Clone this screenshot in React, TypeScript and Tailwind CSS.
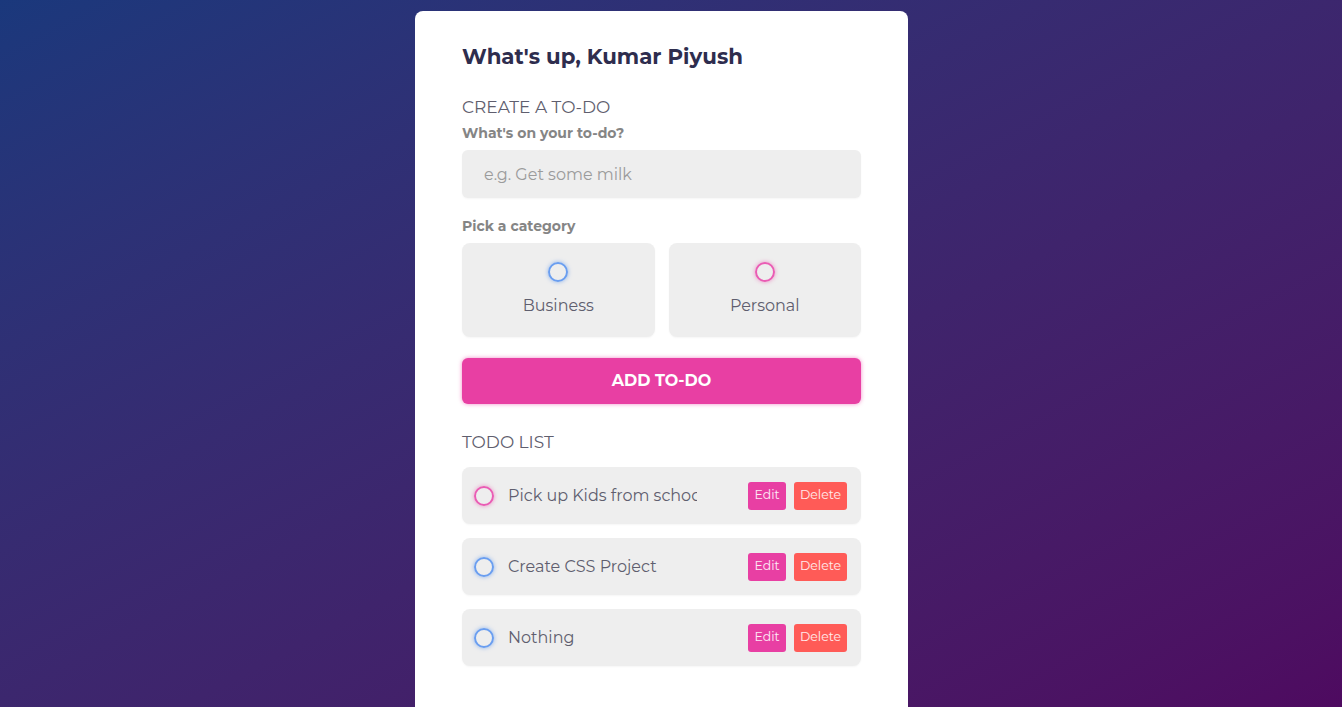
import React, { useState } from 'react';

type Todo = {
  id: number;
  content: string;
  category: 'business' | 'personal';
};

const initialTodos: Todo[] = [
  { id: 1, content: 'Pick up Kids from school', category: 'personal' },
  { id: 2, content: 'Create CSS Project', category: 'business' },
  { id: 3, content: 'Nothing', category: 'business' },
];

function Bubble({ kind }: { kind: 'business' | 'personal' }) {
  return kind === 'business' ? (
    <span className="block w-[20px] h-[20px] rounded-full border-2 border-[#6a9ef0] shadow-[0_0_4px_rgba(58,130,238,0.55)]" />
  ) : (
    <span className="block w-[20px] h-[20px] rounded-full border-2 border-[#ea5cb4] shadow-[0_0_4px_rgba(234,64,164,0.55)]" />
  );
}

export default function App() {
  const [todos] = useState<Todo[]>(initialTodos);
  const [input, setInput] = useState('');

  return (
    <div className="min-h-screen h-[707px] overflow-hidden flex justify-center pt-[11px] pr-[19px] bg-gradient-to-br from-[#1a387c] to-[#4e0a60] font-['Montserrat','Inter',sans-serif]">
      <main className="w-[493px] bg-white rounded-t-lg px-[47px] pt-[31px]">
        <h1 className="text-[21.3px] leading-[28px] font-bold text-[#2e2d4e]">What's up, Kumar Piyush</h1>

        <h2 className="mt-[25px] text-[17px] leading-6 text-[#5f5e6e] uppercase">Create a to-do</h2>
        <label className="block mt-[4px] text-[14px] leading-5 font-bold text-[#858585]">What's on your to-do?</label>
        <input
          type="text"
          value={input}
          onChange={(e: React.ChangeEvent<HTMLInputElement>) => setInput(e.target.value)}
          placeholder="e.g. Get some milk"
          className="mt-[7px] block w-full h-[48px] rounded-md bg-[#eeeeee] px-[22px] text-[16px] text-[#555] placeholder:text-[#9b9b9b] outline-none shadow-[0_1px_2px_rgba(0,0,0,0.04)]"
        />

        <div className="mt-[18px] text-[14px] leading-5 font-bold text-[#858585]">Pick a category</div>
        <div className="mt-[7px] grid grid-cols-2 gap-[14px]">
          <label className="h-[94px] rounded-lg bg-[#eeeeee] flex flex-col items-center pt-[19px] shadow-[0_1px_2px_rgba(0,0,0,0.04)]">
            <Bubble kind="business" />
            <span className="mt-[12px] text-[16px] text-[#5f5e6e]">Business</span>
          </label>
          <label className="h-[94px] rounded-lg bg-[#eeeeee] flex flex-col items-center pt-[19px] shadow-[0_1px_2px_rgba(0,0,0,0.04)]">
            <Bubble kind="personal" />
            <span className="mt-[12px] text-[16px] text-[#5f5e6e]">Personal</span>
          </label>
        </div>

        <button
          type="button"
          className="mt-[21px] w-full h-[46px] rounded-md bg-[#e83fa3] text-white text-[16px] font-bold uppercase shadow-[0_0_4px_rgba(234,64,164,0.6)]"
        >
          Add to-do
        </button>

        <h2 className="mt-[26px] text-[17px] leading-6 text-[#5f5e6e] uppercase">Todo list</h2>
        <div className="mt-[13px] flex flex-col gap-[14px]">
          {todos.map((todo) => (
            <div
              key={todo.id}
              className="h-[57px] rounded-lg bg-[#eeeeee] flex items-center pl-[12px] pr-[14px] shadow-[0_1px_2px_rgba(0,0,0,0.04)]"
            >
              <Bubble kind={todo.category} />
              <input
                type="text"
                readOnly
                value={todo.content}
                className="ml-[14px] w-[189px] bg-transparent text-[16px] text-[#5f5e6e] outline-none"
              />
              <div className="ml-auto flex gap-[8px]">
                <button className="w-[38px] h-[28px] rounded-[3px] bg-[#e83fa3] text-white/90 text-[12.5px]">Edit</button>
                <button className="w-[53px] h-[28px] rounded-[3px] bg-[#ff5b57] text-white/90 text-[12.5px]">Delete</button>
              </div>
            </div>
          ))}
        </div>
      </main>
    </div>
  );
}
